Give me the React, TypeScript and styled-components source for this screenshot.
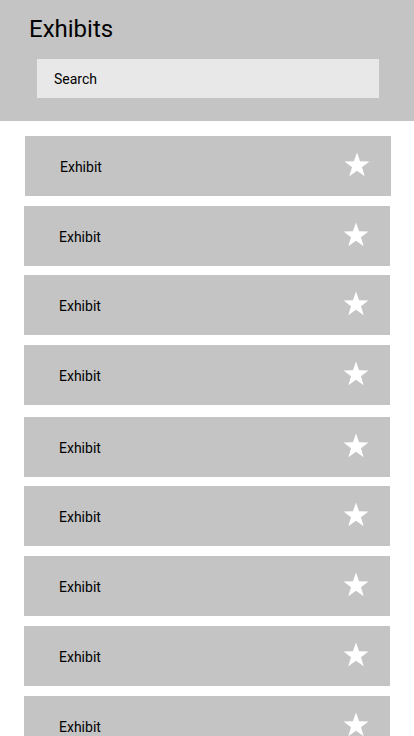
import React from 'react';
import styled, {createGlobalStyle} from 'styled-components';

const GlobalStyle = createGlobalStyle`
	html, body {
		margin: 0;
		padding: 0;
		background: #ffffff;
		font-family: Roboto, 'Liberation Sans', sans-serif;
		color: #000000;
	}
`;

// space above each row, taken from the mockup (it is not perfectly even)
const rowGaps = [15, 10, 9, 10, 12, 9, 10, 10, 10];

export default function App() {
	return (
		<>
			<GlobalStyle />
			<Page>
				<Header>
					<Title>Exhibits</Title>
					<SearchBox>Search</SearchBox>
				</Header>
				<List>
					{rowGaps.map((gap, i) => (
						<ExhibitRow key={i} gap={gap} shift={i === 0 ? 1 : 0}>
							<ExhibitName>Exhibit</ExhibitName>
							<StarIcon />
						</ExhibitRow>
					))}
				</List>
			</Page>
		</>
	);
}

function StarIcon() {
	return (
		<Star viewBox='0 0 30 30' aria-hidden>
			<polygon points='15,2.5 18.08,11.36 27.46,11.55 19.98,17.22 22.7,26.2 15,20.84 7.3,26.2 10.02,17.22 2.54,11.55 11.92,11.36' />
		</Star>
	);
}

const Page = styled.div`
	width: 414px;
	min-height: 736px;
	overflow: hidden;
`;

const Header = styled.header`
	background: #c4c4c4;
	height: 121px;
	box-sizing: border-box;
	padding: 15px 35px 0 29px;
	display: flex;
	flex-direction: column;
`;

const Title = styled.h1`
	margin: 0;
	font-size: 24px;
	font-weight: 400;
	line-height: 28px;
`;

const SearchBox = styled.div`
	margin: 16px 0 0 8px;
	height: 39px;
	background: #e8e8e8;
	display: flex;
	align-items: center;
	padding-left: 17px;
	font-size: 14px;
	color: #000000;
`;

const List = styled.div`
	display: flex;
	flex-direction: column;
	padding: 0 24px;
`;

const ExhibitRow = styled.div<{gap: number; shift: number}>`
	margin-top: ${(p) => p.gap}px;
	margin-left: ${(p) => p.shift}px;
	margin-right: ${(p) => -p.shift}px;
	height: 60px;
	background: #c4c4c4;
	display: flex;
	align-items: center;
	justify-content: space-between;
	padding: 0 19px 0 35px;
	flex-shrink: 0;
`;

const ExhibitName = styled.span`
	font-size: 14px;
	line-height: 16px;
	padding-top: 2px;
`;

const Star = styled.svg`
	width: 30px;
	height: 30px;
	fill: #ffffff;
	margin-top: -3px;
`;
